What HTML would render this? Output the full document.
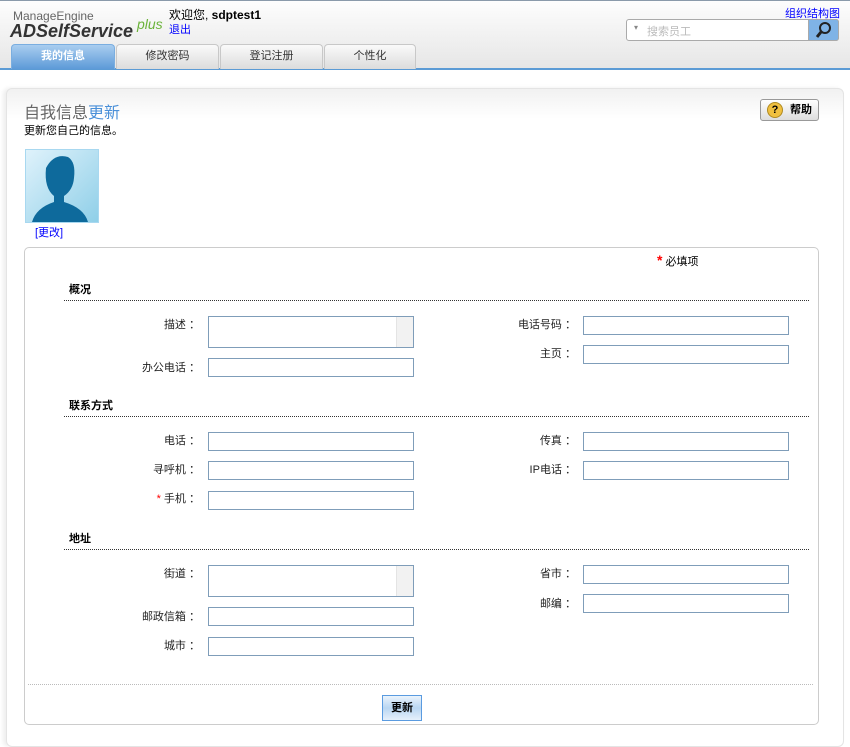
<!DOCTYPE html><html><head><meta charset="utf-8"><style>
*{margin:0;padding:0;box-sizing:border-box}
body{width:850px;height:747px;position:relative;background:#fff;font-family:"Liberation Sans","Noto Sans CJK SC",sans-serif;font-size:11px;color:#000;overflow:hidden}
.a{position:absolute}
.hdr{left:0;top:0;width:850px;height:70px;background:linear-gradient(#fdfdfd,#e6e6e6);border-top:1px solid #8a9aaa;border-bottom:2px solid #5b9bd5}
.tab{top:44px;height:25px;border:1px solid #c8c8c8;border-bottom:none;border-radius:4px 4px 0 0;background:linear-gradient(#fafafa,#dcdcdc);text-align:center;line-height:22px;color:#333}
.lbl{text-align:right;width:120px;color:#222}
.in{height:19px;border:1px solid #7f9db9;background:#fff}
.ta{height:32px;border:1px solid #7f9db9;background:#fff}
.ta:after{content:"";position:absolute;right:0;top:0;width:16px;height:30px;background:#f2f2f2;border-left:1px solid #e4e4e4}
.sec{font-weight:bold;left:69px}
.line{left:64px;width:745px;border-top:1px dotted #333}
</style></head><body>
<div class="a hdr"></div>
<div class="a" style="left:13px;top:9px;color:#666;font-size:12px">ManageEngine</div>
<div class="a" style="left:10px;top:21px;font-size:18px;font-weight:bold;font-style:italic;color:#333">ADSelfService</div>
<div class="a" style="left:137px;top:16px;color:#6bb33a;font-size:14px;font-style:italic">plus</div>
<div class="a" style="left:169px;top:6px;font-size:12px">欢迎您, <b>sdptest1</b></div>
<div class="a" style="left:169px;top:21px;color:#00f">退出</div>
<div class="a" style="left:785px;top:5px;color:#00f">组织结构图</div>
<div class="a" style="left:626px;top:19px;width:213px;height:22px;border:1px solid #aaa;border-radius:3px;background:#fff"></div>
<div class="a" style="left:634px;top:23px;color:#888;font-size:8px">▾</div>
<div class="a" style="left:647px;top:23px;color:#bbb">搜索员工</div>
<div class="a" style="left:808px;top:19px;width:31px;height:22px;background:#7fb3e6;border-radius:0 3px 3px 0;border:1px solid #aaa"><svg width="29" height="20"><circle cx="16" cy="8" r="5" fill="none" stroke="#222" stroke-width="2"/><line x1="12" y1="12" x2="8" y2="17" stroke="#222" stroke-width="3"/></svg></div>
<div class="a tab" style="left:11px;width:104px;background:linear-gradient(#a9cdf0,#5d9ad8);border-color:#7aaee0;color:#fff;font-weight:bold">我的信息</div>
<div class="a tab" style="left:116px;width:103px">修改密码</div>
<div class="a tab" style="left:220px;width:103px">登记注册</div>
<div class="a tab" style="left:324px;width:92px">个性化</div>
<div class="a" style="left:6px;top:88px;width:838px;height:659px;border:1px solid #e4e4e4;border-radius:6px;background:linear-gradient(#f1f1f1,#fff 30px);box-shadow:-3px 0 4px #eee"></div>
<div class="a" style="left:24px;top:99px;font-size:16px;color:#666">自我信息<span style="color:#4a90d9">更新</span></div>
<div class="a" style="left:24px;top:122px">更新您自己的信息。</div>
<div class="a" style="left:760px;top:99px;width:59px;height:22px;border:1px solid #999;border-radius:3px;background:linear-gradient(#fff,#ddd);font-weight:bold;line-height:20px;padding-left:29px">帮助</div>
<div class="a" style="left:767px;top:102px;width:16px;height:16px;border-radius:50%;background:#f0c040;border:1px solid #b08a20;font-size:11px;font-weight:bold;text-align:center;line-height:14px">?</div>
<div class="a" style="left:25px;top:149px;width:74px;height:74px;border:1px solid #a8d8f0;background:linear-gradient(135deg,#dff2fb,#8fcfe8)"><svg width="72" height="72"><path d="M20 18 Q28 3 42 7 Q50 12 48 28 Q47 40 38 46 L38 52 Q58 58 62 72 L6 72 Q10 58 28 52 L28 46 Q18 38 20 18Z" fill="#0e6a9c"/></svg></div>
<div class="a" style="left:35px;top:224px;color:#00f">[更改]</div>
<div class="a" style="left:24px;top:247px;width:795px;height:478px;border:1px solid #ccc;border-radius:5px;background:#fff"></div>
<div class="a" style="left:657px;top:252px"><span style="color:red;font-size:14px;font-weight:bold">*</span> 必填项</div>
<div class="a sec" style="top:281px">概况</div><div class="a line" style="top:300px"></div>
<div class="a lbl" style="left:80px;top:316px">描述 ：</div><div class="a ta" style="left:208px;top:316px;width:206px"></div>
<div class="a lbl" style="left:80px;top:359px">办公电话 ：</div><div class="a in" style="left:208px;top:358px;width:206px"></div>
<div class="a lbl" style="left:456px;top:316px">电话号码 ：</div><div class="a in" style="left:583px;top:316px;width:206px"></div>
<div class="a lbl" style="left:456px;top:345px">主页 ：</div><div class="a in" style="left:583px;top:345px;width:206px"></div>
<div class="a sec" style="top:397px">联系方式</div><div class="a line" style="top:416px"></div>
<div class="a lbl" style="left:80px;top:432px">电话 ：</div><div class="a in" style="left:208px;top:432px;width:206px"></div>
<div class="a lbl" style="left:80px;top:461px">寻呼机 ：</div><div class="a in" style="left:208px;top:461px;width:206px"></div>
<div class="a lbl" style="left:80px;top:490px"><span style="color:red">*</span> 手机 ：</div><div class="a in" style="left:208px;top:491px;width:206px"></div>
<div class="a lbl" style="left:456px;top:432px">传真 ：</div><div class="a in" style="left:583px;top:432px;width:206px"></div>
<div class="a lbl" style="left:456px;top:461px">IP电话 ：</div><div class="a in" style="left:583px;top:461px;width:206px"></div>
<div class="a sec" style="top:530px">地址</div><div class="a line" style="top:549px"></div>
<div class="a lbl" style="left:80px;top:565px">街道 ：</div><div class="a ta" style="left:208px;top:565px;width:206px"></div>
<div class="a lbl" style="left:80px;top:608px">邮政信箱 ：</div><div class="a in" style="left:208px;top:607px;width:206px"></div>
<div class="a lbl" style="left:80px;top:637px">城市 ：</div><div class="a in" style="left:208px;top:637px;width:206px"></div>
<div class="a lbl" style="left:456px;top:565px">省市 ：</div><div class="a in" style="left:583px;top:565px;width:206px"></div>
<div class="a lbl" style="left:456px;top:595px">邮编 ：</div><div class="a in" style="left:583px;top:594px;width:206px"></div>
<div class="a" style="left:28px;top:684px;width:785px;border-top:1px dotted #bbb"></div>
<div class="a" style="left:382px;top:695px;width:40px;height:26px;border:1px solid #5a9be0;background:linear-gradient(#eaf3fc,#b9d6f2 50%,#e6f0fb);font-weight:bold;text-align:center;line-height:24px">更新</div>
</body></html>
